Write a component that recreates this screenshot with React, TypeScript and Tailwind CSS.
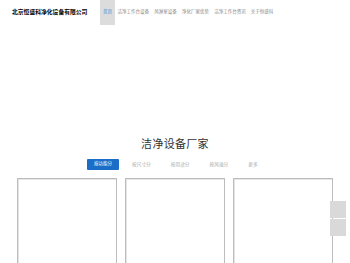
const nav = ['洁净工作台设备', '风淋室设备', '净化厂家优势', '洁净工作台资讯', '关于恒盛科']
const tabs = ['按尺寸分', '按用途分', '按风速分', '更多']

export default function App() {
  return (
    <div className="w-[350px] h-[263px] overflow-hidden bg-white relative font-['Liberation_Sans','Noto_Sans_CJK_SC',sans-serif]">
      <header className="h-[25px] flex items-center">
        <div className="ml-[12px] w-[76px] text-[5.8px] font-bold text-black whitespace-nowrap">北京恒盛科净化设备有限公司</div>
        <nav className="ml-[12px] flex items-stretch h-full">
          <div className="w-[15px] bg-[#dcdcdc] flex items-center justify-center text-[4.5px] text-[#3b8fd8]">首页</div>
          {nav.map((n) => (
            <div key={n} className="flex items-center px-[2.6px] text-[4.5px] text-[#888] whitespace-nowrap">{n}</div>
          ))}
        </nav>
      </header>

      <section className="mt-[112px] flex flex-col items-center">
        <h2 className="text-[11px] leading-[14px] text-[#333] font-normal tracking-[0.3px]">洁净设备厂家</h2>
        <div className="mt-[8px] ml-[87px] self-start flex items-center">
          <div className="w-[32px] h-[11px] bg-[#1a6ec8] rounded-[1px] flex items-center justify-center text-[4.5px] text-white">按功能分</div>
          <div className="ml-[13px] flex items-center gap-[20px]">
            {tabs.map((t) => (
              <div key={t} className="text-[4.7px] text-[#aaa] whitespace-nowrap">{t}</div>
            ))}
          </div>
        </div>
      </section>

      <div className="mt-[8px] ml-[17px] flex gap-[8px]">
        {[0, 1, 2].map((i) => (
          <div key={i} className="w-[100px] h-[90px] border border-[#bdbdbd] shadow-[inset_1px_1px_0_#e5e5e5]" />
        ))}
      </div>

      <div className="absolute right-[4px] top-[201px] flex flex-col gap-[1px]">
        <div className="w-[16px] h-[17px] bg-[#d9d9d9]" />
        <div className="w-[16px] h-[17px] bg-[#d9d9d9]" />
      </div>
    </div>
  )
}
